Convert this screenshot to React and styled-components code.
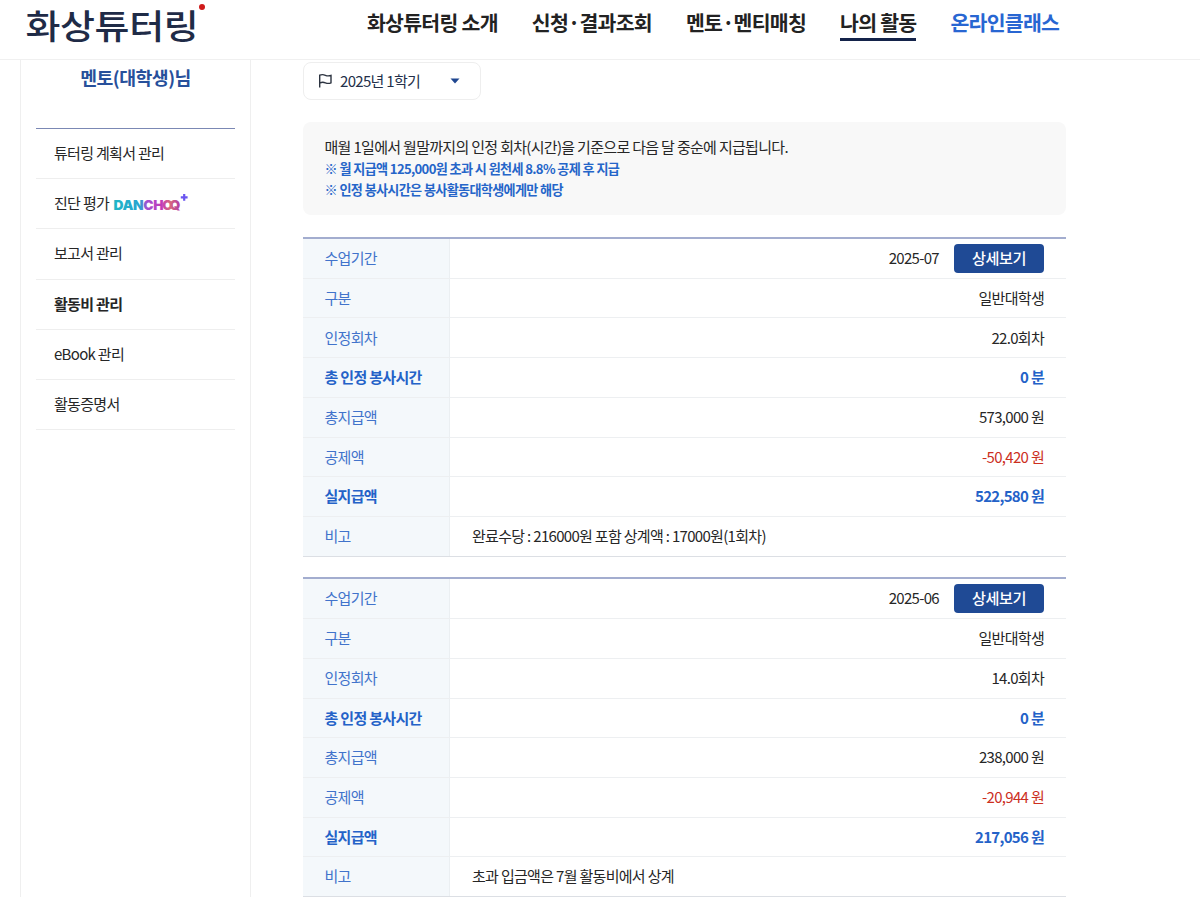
import React from "react";
import styled, { createGlobalStyle, css } from "styled-components";

const GlobalStyle = createGlobalStyle`
  * { box-sizing: border-box; }
  html, body { margin: 0; background: #fff; }
  body {
    height: 897px;
    overflow: hidden;
    font-family: "Noto Sans CJK KR", "Noto Sans", sans-serif;
    font-size: 15px;
    letter-spacing: -0.69px;
    color: #262626;
  }
`;

const Page = styled.div`
  width: 1200px;
  height: 897px;
  overflow: hidden;
  display: flex;
  flex-direction: column;
`;

const Header = styled.header`
  flex: none;
  height: 60px;
  display: flex;
  align-items: flex-start;
  border-bottom: 1px solid #f0f0f0;
`;

const Logo = styled.a`
  width: 341.5px;
  margin-left: 25.5px;
  display: flex;
  align-items: flex-start;
`;

const LogoName = styled.span`
  font-size: 38px;
  line-height: 53px;
  font-weight: 500;
  letter-spacing: -0.4px;
  color: #1f2b47;
  white-space: nowrap;
  transform: scaleY(0.9);
  transform-origin: 0 0;
`;

const LogoDot = styled.i`
  width: 6px;
  height: 6px;
  margin: 4px 0 0 1px;
  border-radius: 50%;
  background: #cf1a1a;
`;

const Nav = styled.nav`
  display: flex;
  gap: 34px;
`;

const NavItem = styled.a`
  height: 41px;
  font-size: 20.5px;
  line-height: 44px;
  font-weight: 700;
  letter-spacing: -0.74px;
  white-space: nowrap;
  color: ${(p) => (p.$accent ? "#2866d2" : "#222")};
  border-bottom: 3px solid ${(p) => (p.$active ? "#14234a" : "transparent")};
`;

const Body = styled.div`
  flex: 1;
  display: flex;
  align-items: stretch;
  min-height: 0;
`;

const Sidebar = styled.aside`
  width: 231px;
  margin-left: 20px;
  padding: 0 15px;
  border: solid #efefef;
  border-width: 0 1px;
`;

const UserName = styled.h2`
  margin: 0;
  height: 68px;
  font-size: 18.3px;
  line-height: 34px;
  font-weight: 700;
  text-align: center;
  letter-spacing: -0.5px;
  color: #27509b;
`;

const Menu = styled.ul`
  list-style: none;
  margin: 0;
  padding: 0;
  border-top: 1px solid #7b88b4;
`;

const MenuItem = styled.li`
  height: 50.2px;
  padding: 0 0 2px 18px;
  display: flex;
  align-items: center;
  gap: 5px;
  font-weight: ${(p) => (p.$active ? 700 : 400)};
  border-bottom: 1px solid #eee;
`;

const Brand = styled.svg`
  display: block;
  overflow: visible;
`;

const Main = styled.main`
  width: 763px;
  margin-left: 52px;
  padding-top: 2px;
`;

const Select = styled.button`
  width: 178px;
  height: 38px;
  padding: 0 20px 2px 14px;
  display: flex;
  align-items: center;
  font: inherit;
  letter-spacing: inherit;
  color: #24304a;
  background: #fff;
  border: 1px solid #eee;
  border-radius: 8px;

  svg { margin-top: 2px; }
`;

const SelectText = styled.span`
  flex: 1;
  margin-left: 7px;
  text-align: left;
`;

const Notice = styled.section`
  height: 93px;
  margin: 22px 0;
  padding: 14px 21.5px;
  border-radius: 8px;
  background: #f8f8f8;
`;

const NoticeText = styled.p`
  margin: 0;
  font-size: 15px;
  line-height: 22px;
`;

const NoticeStrong = styled.p`
  margin: 0;
  font-size: 13.1px;
  line-height: 21px;
  font-weight: 700;
  letter-spacing: -0.68px;
  word-spacing: 0.2px;
  color: #2565c9;
`;

const Table = styled.dl`
  margin: 0 0 20.6px;
  border-top: 2px solid #a3adcf;
`;

const Row = styled.div`
  display: grid;
  grid-template-columns: 147px 1fr;
  height: 39.72px;
  border-bottom: 1px solid ${(p) => (p.$last ? "#dcdfe4" : "#edeff1")};
`;

const tones = {
  text: css`color: #262626;`,
  blue: css`color: #2462c8; font-weight: 700;`,
  red: css`color: #cc2f1e;`,
};

const Label = styled.dt`
  padding: 0 0 1.6px 21.5px;
  display: flex;
  align-items: center;
  background: #f4f8fb;
  border-right: 1px solid #ebeff2;
  color: ${(p) => (p.$strong ? "#2462c8" : "#4173cb")};
  font-weight: ${(p) => (p.$strong ? 700 : 400)};
`;

const Value = styled.dd`
  margin: 0;
  padding: 0 22px 1.6px;
  display: flex;
  align-items: center;
  justify-content: ${(p) => (p.$left ? "flex-start" : "flex-end")};
  gap: 15px;
  white-space: nowrap;
  ${(p) => tones[p.$tone || "text"]}
`;

const DetailButton = styled.button`
  width: 90px;
  height: 29px;
  margin-top: 2px;
  padding: 0 0 3px;
  border: 0;
  border-radius: 4px;
  font: inherit;
  font-size: 15.2px;
  font-weight: 500;
  letter-spacing: -0.5px;
  color: #fff;
  background: #1f4a95;
`;

const FlagIcon = () => (
  <svg width="15" height="16" viewBox="0 0 15 16" fill="none" stroke="#2c3340" strokeWidth="1.4">
    <path d="M1.7 14.600V2.2C4 1.2 5.6 1.5 7.4 2.3C9.3 3.1 11 3.1 13 2.4V9.8C11 10.7 9.3 10.5 7.4 9.8C5.6 9.1 4 9 1.7 10" />
  </svg>
);

const CaretIcon = () => (
  <svg width="10" height="6" viewBox="0 0 10 6">
    <path d="M0.5 0.5H9.5L5 5.5Z" fill="#1f4690" />
  </svg>
);

const Danchoq = () => (
  <Brand width="75" height="20" viewBox="0 0 75 20">
    <defs>
      <linearGradient id="brand" gradientUnits="userSpaceOnUse" x1="0" y1="0" x2="70" y2="0">
        <stop offset="0" stopColor="#1fb5c6" />
        <stop offset="0.38" stopColor="#2aa3d0" />
        <stop offset="0.46" stopColor="#a050d0" />
        <stop offset="0.68" stopColor="#c23cb8" />
        <stop offset="0.8" stopColor="#d8697c" />
        <stop offset="1" stopColor="#a02bb8" />
      </linearGradient>
    </defs>
    <text
      y="17"
      x="-0.5"
      dx="0 0 0 0 0 -1 -3.2"
      fill="url(#brand)"
      fontFamily="Inter, sans-serif"
      fontWeight="900"
      fontSize="13.8"
      letterSpacing="-0.35"
    >
      DANCHOQ
    </text>
    <path d="M70.200 1V7.800M66.800 4.400H73.600" stroke="#6a55f0" strokeWidth="2.200" />
  </Brand>
);

const navItems = [
  { name: "화상튜터링 소개" },
  { name: "신청·결과조회" },
  { name: "멘토·멘티매칭" },
  { name: "나의 활동", active: true },
  { name: "온라인클래스", accent: true },
];

const menuItems = [
  { name: "튜터링 계획서 관리" },
  { name: "진단 평가", brand: true },
  { name: "보고서 관리" },
  { name: "활동비 관리", active: true },
  { name: "eBook 관리" },
  { name: "활동증명서" },
];

const payments = [
  { month: "2025-07", count: "22.0회차", total: "573,000 원", cut: "-50,420 원", net: "522,580 원", note: "완료수당 : 216000원 포함 상계액 : 17000원(1회차)" },
  { month: "2025-06", count: "14.0회차", total: "238,000 원", cut: "-20,944 원", net: "217,056 원", note: "초과 입금액은 7월 활동비에서 상계" },
];

const Payment = ({ data }) => (
  <Table>
    <Row>
      <Label>수업기간</Label>
      <Value>{data.month}<DetailButton>상세보기</DetailButton></Value>
    </Row>
    <Row><Label>구분</Label><Value>일반대학생</Value></Row>
    <Row><Label>인정회차</Label><Value>{data.count}</Value></Row>
    <Row><Label $strong>총 인정 봉사시간</Label><Value $tone="blue">0 분</Value></Row>
    <Row><Label>총지급액</Label><Value>{data.total}</Value></Row>
    <Row><Label>공제액</Label><Value $tone="red">{data.cut}</Value></Row>
    <Row><Label $strong>실지급액</Label><Value $tone="blue">{data.net}</Value></Row>
    <Row $last><Label>비고</Label><Value $left>{data.note}</Value></Row>
  </Table>
);

export default function App() {
  return (
    <Page>
      <GlobalStyle />
      <Header>
        <Logo>
          <LogoName>화상튜터링</LogoName>
          <LogoDot />
        </Logo>
        <Nav>
          {navItems.map((n) => (
            <NavItem key={n.name} $active={n.active} $accent={n.accent}>{n.name}</NavItem>
          ))}
        </Nav>
      </Header>
      <Body>
        <Sidebar>
          <UserName>멘토(대학생)님</UserName>
          <Menu>
            {menuItems.map((m) => (
              <MenuItem key={m.name} $active={m.active}>
                {m.name}
                {m.brand && <Danchoq />}
              </MenuItem>
            ))}
          </Menu>
        </Sidebar>
        <Main>
          <Select>
            <FlagIcon />
            <SelectText>2025년 1학기</SelectText>
            <CaretIcon />
          </Select>
          <Notice>
            <NoticeText>매월 1일에서 월말까지의 인정 회차(시간)을 기준으로 다음 달 중순에 지급됩니다.</NoticeText>
            <NoticeStrong>※ 월 지급액 125,000원 초과 시 원천세 8.8% 공제 후 지급</NoticeStrong>
            <NoticeStrong>※ 인정 봉사시간은 봉사활동대학생에게만 해당</NoticeStrong>
          </Notice>
          {payments.map((p) => <Payment key={p.month} data={p} />)}
        </Main>
      </Body>
    </Page>
  );
}
